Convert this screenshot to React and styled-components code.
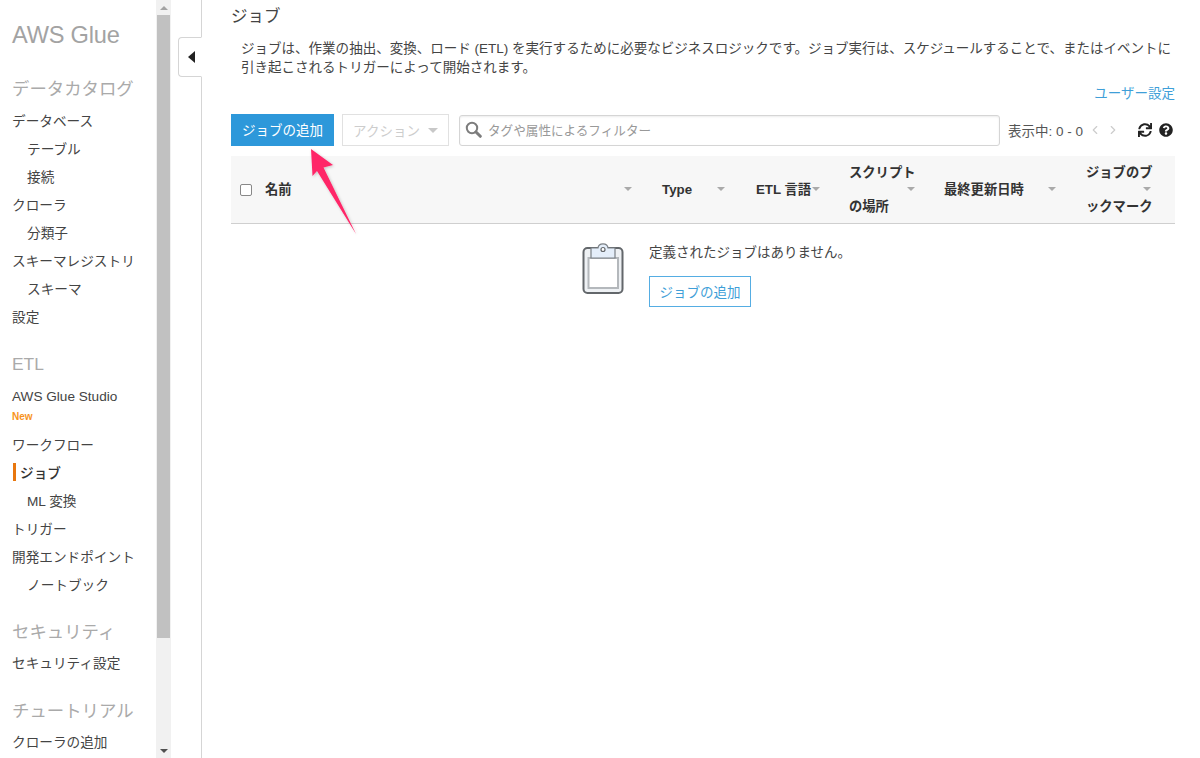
import React from "react";
import styled, { createGlobalStyle } from "styled-components";
import { FaSync, FaQuestionCircle } from "react-icons/fa";
import { ChevronLeft, ChevronRight } from "lucide-react";

const FONT = `"Liberation Sans", "Noto Sans CJK JP", sans-serif`;

const Global = createGlobalStyle`
  html, body { margin: 0; padding: 0; background: #fff; height: 100%; overflow: hidden; }
  body { font-family: ${FONT}; color: #444; }
  * { box-sizing: border-box; }
`;

const Page = styled.div`
  position: relative;
  display: flex;
  width: 1200px;
  height: 758px;
  overflow: hidden;
`;

const Sidebar = styled.aside`
  flex: 0 0 171px;
  display: flex;
  height: 758px;
  overflow: hidden;
`;

const Nav = styled.nav`
  flex: 0 0 156px;
  padding: 0 0 0 12px;
  display: flex;
  flex-direction: column;
`;

const Brand = styled.div`
  font-size: 23.6px;
  line-height: 32px;
  color: #a3a3a3;
  margin-top: 19px;
  margin-bottom: 24px;
  letter-spacing: -0.2px;
`;

const Section = styled.div`
  font-size: 17.4px;
  line-height: 28px;
  color: #aaa;
  margin-top: ${(p) => p.$top || 0}px;
  margin-bottom: ${(p) => p.$bottom ?? 5}px;
  white-space: nowrap;
`;

const Item = styled.div`
  display: flex;
  align-items: center;
  height: 28px;
  flex: 0 0 auto;
  font-size: 13.65px;
  color: ${(p) => (p.$active ? "#333" : "#444")};
  padding-left: ${(p) => (p.$sub ? 15 : 0)}px;
  white-space: nowrap;
  font-weight: ${(p) => (p.$active ? 500 : 400)};
`;

const Marker = styled.span`
  width: 3px;
  height: 18px;
  background: #e8770f;
  margin-right: 4px;
  margin-left: 1px;
`;

const StudioItem = styled(Item)`
  height: 25px;
  font-size: 13.6px;
`;

const NewTag = styled.div`
  font-size: 10px;
  font-weight: 700;
  line-height: 16px;
  height: 16px;
  color: #f7941e;
  margin-bottom: 5px;
`;

const Track = styled.div`
  flex: 0 0 15px;
  background: #f1f1f1;
  display: flex;
  flex-direction: column;
  align-items: center;
  height: 758px;
`;

const TrackEnd = styled.div`
  flex: 0 0 15px;
  display: flex;
  align-items: center;
  justify-content: center;
  background: #f1f1f1;
`;

const Thumb = styled.div`
  flex: 0 0 623px;
  align-self: stretch;
  margin: 0 1px;
  background: #c1c1c1;
`;

const TrackGap = styled.div`
  flex: 1;
`;

const ScrollArrow = styled.span`
  width: 0;
  height: 0;
  border-left: 4px solid transparent;
  border-right: 4px solid transparent;
  ${(p) =>
    p.$up
      ? "border-bottom: 4px solid #a3a3a3;"
      : "border-top: 4px solid #505050;"}
`;

const Gutter = styled.div`
  flex: 0 0 31px;
  min-width: 0;
  border-right: 1px solid #d5d5d5;
  padding: 37px 0 0 7px;
`;

const Toggle = styled.button`
  display: flex;
  align-items: center;
  justify-content: center;
  width: 24px;
  height: 40px;
  padding: 0;
  background: #fff;
  border: 1px solid #d5d5d5;
  border-right: 1px solid #fff;
  border-radius: 4px 0 0 4px;
`;

const ToggleArrow = styled.span`
  width: 0;
  height: 0;
  border-top: 6px solid transparent;
  border-bottom: 6px solid transparent;
  border-right: 7px solid #222;
  margin-left: 3px;
`;

const Main = styled.main`
  flex: 1;
  padding: 0 25px 0 29px;
  min-width: 0;
`;

const Title = styled.h1`
  margin: 4px 0 0;
  font-size: 16.5px;
  font-weight: 400;
  line-height: 24px;
  color: #444;
`;

const Description = styled.p`
  margin: 11px 0 0;
  padding-left: 10px;
  font-size: 13.53px;
  line-height: 19px;
  color: #444;
  white-space: nowrap;
`;

const SettingsRow = styled.div`
  display: flex;
  justify-content: flex-end;
  margin-top: 7px;
  height: 20px;
  line-height: 20px;
`;

const TextLink = styled.a`
  font-size: 13.5px;
  color: #3f9fd8;
`;

const Toolbar = styled.div`
  display: flex;
  align-items: center;
  height: 32px;
  margin-top: 10px;
`;

const PrimaryButton = styled.button`
  flex: 0 0 103px;
  height: 32px;
  padding: 0 0 2px;
  margin-right: 8px;
  background: #2d98da;
  border: 1px solid #2d98da;
  color: #fff;
  font: 400 13.5px ${FONT};
`;

const ActionButton = styled.button`
  flex: 0 0 107px;
  height: 32px;
  margin-right: 10px;
  padding: 0;
  display: flex;
  align-items: center;
  justify-content: center;
  gap: 8px;
  background: #fff;
  border: 1px solid #e1e1e1;
  color: #cdcdcd;
  font: 400 13.5px ${FONT};
`;

const Caret = styled.span`
  display: inline-block;
  width: 0;
  height: 0;
  border-left: 5px solid transparent;
  border-right: 5px solid transparent;
  border-top: 5px solid #c8c8c8;
`;

const Search = styled.div`
  flex: 0 0 541px;
  height: 31px;
  display: flex;
  align-items: center;
  gap: 6px;
  padding: 0 0 1px 5px;
  border: 1px solid #d5d5d5;
  border-radius: 3px;
  box-shadow: inset 0 1px 2px rgba(0, 0, 0, 0.08);
  font-size: 12.6px;
  color: #999;
`;

const SearchGlyph = styled.svg`
  width: 17px;
  height: 17px;
  flex: 0 0 17px;
`;

const Pager = styled.div`
  display: flex;
  align-items: center;
  margin-left: 8px;
  font-size: 13.5px;
  color: #555;
  white-space: nowrap;
`;

const PagerArrows = styled.span`
  display: flex;
  gap: 4px;
  margin-left: 5px;
  color: #ccc;
`;

const PagerIcons = styled.span`
  display: flex;
  align-items: center;
  gap: 7px;
  margin-left: 18px;
  color: #222;
`;

const HeaderRow = styled.div`
  display: grid;
  grid-template-columns: 24px 397px 94px 93px 95px 142px 99px;
  height: 68px;
  margin-top: 10px;
  background: #f7f7f7;
  border-bottom: 1px solid #cfcfcf;
`;

const CheckCell = styled.div`
  display: flex;
  align-items: center;
  padding-left: 9px;
`;

const CheckBox = styled.span`
  width: 12px;
  height: 12px;
  margin-top: -6px;
  background: #fff;
  border: 1px solid #888;
  border-radius: 2px;
`;

const HeadCell = styled.div`
  position: relative;
  display: flex;
  align-items: center;
  padding: 0 10px 5px;
  font-size: 13.3px;
  font-weight: 700;
  line-height: 34px;
  color: #333;
  white-space: nowrap;
`;

const SortCaret = styled.span`
  position: absolute;
  top: 31px;
  right: ${(p) => p.$right}px;
  width: 0;
  height: 0;
  border-left: 4px solid transparent;
  border-right: 4px solid transparent;
  border-top: 4px solid #aaa;
`;

const Empty = styled.div`
  display: flex;
  justify-content: center;
  gap: 25px;
  padding: 21px 0 0 27px;
`;

const EmptyBody = styled.div`
  display: flex;
  flex-direction: column;
  align-items: flex-start;
  gap: 14px;
`;

const EmptyText = styled.div`
  font-size: 13.5px;
  line-height: 18px;
  color: #444;
  margin-top: -1px;
`;

const OutlineButton = styled.button`
  width: 102px;
  height: 31px;
  padding: 0 0 2px;
  background: #fff;
  border: 1px solid #55ade3;
  color: #3f9fd8;
  font: 400 13.5px ${FONT};
`;

const ArrowOverlay = styled.svg`
  position: absolute;
  left: 300px;
  top: 140px;
  width: 70px;
  height: 105px;
  pointer-events: none;
`;

const ClipIcon = styled.svg`
  flex: 0 0 42px;
  width: 42px;
  height: 52px;
  margin-top: -2px;
`;

const columns = [
  { label: "名前", right: 20 },
  { label: "Type", right: 21 },
  { label: "ETL 言語", right: 19 },
  { label: ["スクリプト", "の場所"], right: 19 },
  { label: "最終更新日時", right: 20 },
  { label: ["ジョブのブ", "ックマーク"], right: 24 },
];

function Clipboard() {
  return (
    <ClipIcon viewBox="0 0 42 52" fill="none">
      <rect x="1.5" y="5" width="39" height="45" rx="4" fill="#eef1f4" stroke="#63676b" strokeWidth="2" />
      <rect x="6.5" y="15" width="29.5" height="30" fill="#fff" stroke="#b4b8bc" strokeWidth="2" />
      <path d="M9 5 V15 H33 V5 H26 C25.5 -0.5 16.5 -0.5 16 5 Z" fill="#e4eefa" stroke="#7b8086" strokeWidth="1.2" />
      <circle cx="21" cy="6.5" r="2" fill="#fff" stroke="#63676b" strokeWidth="1.2" />
    </ClipIcon>
  );
}

export default function App() {
  return (
    <Page>
      <Global />
      <Sidebar>
        <Nav>
          <Brand>AWS Glue</Brand>
          <Section $bottom={3}>データカタログ</Section>
          <Item>データベース</Item>
          <Item $sub>テーブル</Item>
          <Item $sub>接続</Item>
          <Item>クローラ</Item>
          <Item $sub>分類子</Item>
          <Item>スキーマレジストリ</Item>
          <Item $sub>スキーマ</Item>
          <Item>設定</Item>
          <Section $top={20} $bottom={6}>ETL</Section>
          <StudioItem>AWS Glue Studio</StudioItem>
          <NewTag>New</NewTag>
          <Item>ワークフロー</Item>
          <Item $active><Marker />ジョブ</Item>
          <Item $sub>ML 変換</Item>
          <Item>トリガー</Item>
          <Item>開発エンドポイント</Item>
          <Item $sub>ノートブック</Item>
          <Section $top={20} $bottom={2}>セキュリティ</Section>
          <Item>セキュリティ設定</Item>
          <Section $top={21} $bottom={2}>チュートリアル</Section>
          <Item>クローラの追加</Item>
        </Nav>
        <Track>
          <TrackEnd><ScrollArrow $up /></TrackEnd>
          <Thumb />
          <TrackGap />
          <TrackEnd><ScrollArrow /></TrackEnd>
        </Track>
      </Sidebar>
      <Gutter>
        <Toggle aria-label="collapse"><ToggleArrow /></Toggle>
      </Gutter>
      <Main>
        <Title>ジョブ</Title>
        <Description>
          ジョブは、作業の抽出、変換、ロード (ETL) を実行するために必要なビジネスロジックです。ジョブ実行は、スケジュールすることで、またはイベントに
          <br />
          引き起こされるトリガーによって開始されます。
        </Description>
        <SettingsRow><TextLink>ユーザー設定</TextLink></SettingsRow>
        <Toolbar>
          <PrimaryButton>ジョブの追加</PrimaryButton>
          <ActionButton>アクション <Caret /></ActionButton>
          <Search>
            <SearchGlyph viewBox="0 0 17 17" fill="none">
              <circle cx="7" cy="7" r="5.2" stroke="#7d7d7d" strokeWidth="2" />
              <path d="M11 11 L15.3 15.3" stroke="#7d7d7d" strokeWidth="3" strokeLinecap="round" />
            </SearchGlyph>
            タグや属性によるフィルター
          </Search>
          <Pager>
            表示中: 0 - 0
            <PagerArrows><ChevronLeft size={14} /><ChevronRight size={14} /></PagerArrows>
            <PagerIcons><FaSync size={14} /><FaQuestionCircle size={14} /></PagerIcons>
          </Pager>
        </Toolbar>
        <HeaderRow>
          <CheckCell><CheckBox /></CheckCell>
          {columns.map((c, i) => (
            <HeadCell key={i}>
              <span>
                {Array.isArray(c.label) ? (
                  <>{c.label[0]}<br />{c.label[1]}</>
                ) : c.label}
              </span>
              <SortCaret $right={c.right} />
            </HeadCell>
          ))}
        </HeaderRow>
        <Empty>
          <Clipboard />
          <EmptyBody>
            <EmptyText>定義されたジョブはありません。</EmptyText>
            <OutlineButton>ジョブの追加</OutlineButton>
          </EmptyBody>
        </Empty>
      </Main>
      <ArrowOverlay viewBox="300 140 70 105">
        <defs>
          <filter id="arrowShadow" x="-30%" y="-30%" width="160%" height="160%">
            <feDropShadow dx="1" dy="1" stdDeviation="1.5" floodColor="#000" floodOpacity="0.22" />
          </filter>
        </defs>
        <polygon
          points="311,149 333,165 323.5,167.5 356,234 317,171 312.5,176"
          fill="#ff2667"
          filter="url(#arrowShadow)"
        />
      </ArrowOverlay>
    </Page>
  );
}
